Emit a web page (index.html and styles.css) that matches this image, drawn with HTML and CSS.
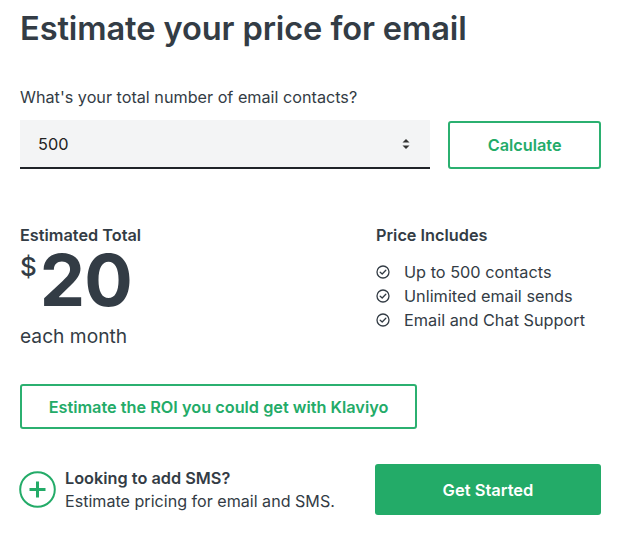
FILE: index.html
```html
<!DOCTYPE html>
<html>
<head>
<meta charset="utf-8">
<link rel="stylesheet" href="styles.css">
</head>
<body>
<main class="page">
  <h1 class="title">Estimate your price for email</h1>
  <label class="label">What's your total number of email contacts?</label>
  <div class="form-row">
    <div class="select">
      <span class="select-value">500</span>
      <svg class="spinner" width="8" height="12" viewBox="0 0 8 12"><path d="M4 1 L7.5 4.5 H0.5 Z" fill="#333"/><path d="M4 11 L7.5 7.5 H0.5 Z" fill="#333"/></svg>
    </div>
    <button class="btn-outline calc">Calculate</button>
  </div>
  <div class="results">
    <div class="total">
      <div class="sub-title">Estimated Total</div>
      <div class="price"><span class="dollar">$</span><span class="amount">20</span></div>
      <div class="period">each month</div>
    </div>
    <div class="includes">
      <div class="sub-title">Price Includes</div>
      <ul class="list">
        <li><svg class="check" width="14" height="14" viewBox="0 0 14 14"><circle cx="7" cy="7" r="6" fill="none" stroke="#333c45" stroke-width="1.3"/><path d="M4.2 7.2 L6.2 9 L9.8 5.2" fill="none" stroke="#333c45" stroke-width="1.3" stroke-linecap="round" stroke-linejoin="round"/></svg>Up to 500 contacts</li>
        <li><svg class="check" width="14" height="14" viewBox="0 0 14 14"><circle cx="7" cy="7" r="6" fill="none" stroke="#333c45" stroke-width="1.3"/><path d="M4.2 7.2 L6.2 9 L9.8 5.2" fill="none" stroke="#333c45" stroke-width="1.3" stroke-linecap="round" stroke-linejoin="round"/></svg>Unlimited email sends</li>
        <li><svg class="check" width="14" height="14" viewBox="0 0 14 14"><circle cx="7" cy="7" r="6" fill="none" stroke="#333c45" stroke-width="1.3"/><path d="M4.2 7.2 L6.2 9 L9.8 5.2" fill="none" stroke="#333c45" stroke-width="1.3" stroke-linecap="round" stroke-linejoin="round"/></svg>Email and Chat Support</li>
      </ul>
    </div>
  </div>
  <button class="btn-outline roi">Estimate the ROI you could get with Klaviyo</button>
  <div class="bottom">
    <div class="sms">
      <svg class="plus" width="37" height="37" viewBox="0 0 37 37"><circle cx="18.5" cy="18.5" r="17.3" fill="none" stroke="#23ab68" stroke-width="2"/><path d="M18.5 10.5 V26.5 M10.5 18.5 H26.5" stroke="#23ab68" stroke-width="3"/></svg>
      <div class="sms-text">
        <div class="sms-title">Looking to add SMS?</div>
        <div class="sms-desc">Estimate pricing for email and SMS.</div>
      </div>
    </div>
    <button class="btn-solid">Get Started</button>
  </div>
</main>
</body>
</html>
```
FILE: styles.css
```css
* { box-sizing: border-box; }
body {
  margin: 0;
  background: #fff;
  font-family: Inter, "Noto Sans", sans-serif;
  color: #333c45;
}
.page {
  padding: 8px 23px 0 20px;
  display: flex;
  flex-direction: column;
}
.title {
  margin: 0;
  font-size: 32.6px;
  font-weight: 600;
  line-height: 40px;
  letter-spacing: -0.1px;
}
.label {
  margin-top: 39px;
  font-size: 16.2px;
  line-height: 20px;
}
.form-row {
  margin-top: 13px;
  display: flex;
  gap: 18px;
  align-items: flex-start;
}
.select {
  width: 411px;
  height: 49px;
  background: #f3f4f5;
  border-bottom: 2px solid #1f2328;
  display: flex;
  align-items: center;
  justify-content: space-between;
  padding: 0 20px 0 18px;
}
.select-value { font-size: 16.3px; color: #222; }
.spinner { display: block; }
.btn-outline {
  font-family: inherit;
  background: #fff;
  border: 2px solid #2bb070;
  border-radius: 3px;
  color: #23ab68;
  font-size: 16.3px;
  font-weight: 600;
  cursor: pointer;
}
.calc {
  width: 153px;
  height: 48px;
  margin-top: 1px;
}
.results {
  margin-top: 56px;
  display: flex;
}
.total { width: 356px; }
.sub-title {
  font-size: 16.3px;
  font-weight: 600;
  line-height: 20px;
}
.price {
  display: flex;
  align-items: flex-start;
  margin-top: 0;
  height: 70px;
}
.dollar {
  font-size: 26px;
  font-weight: 500;
  line-height: 20px;
  margin-top: 12px;
  margin-right: 3px;
}
.amount {
  font-size: 72px;
  font-weight: 700;
  line-height: 70px;
  letter-spacing: -1px;
}
.period {
  margin-top: 9px;
  font-size: 19.2px;
  line-height: 24px;
}
.list {
  list-style: none;
  margin: 15px 0 0;
  padding: 0;
}
.list li {
  display: flex;
  align-items: center;
  font-size: 16.3px;
  line-height: 24px;
}
.check { margin-right: 14px; flex: none; }
.roi {
  margin-top: 36px;
  width: 397px;
  height: 45px;
}
.bottom {
  margin-top: 35px;
  display: flex;
  align-items: center;
  justify-content: space-between;
}
.sms {
  display: flex;
  align-items: center;
  gap: 9px;
}
.plus { display: block; margin-left: -1px; }
.sms-title {
  font-size: 16.3px;
  font-weight: 600;
  line-height: 23px;
}
.sms-desc {
  font-size: 16.1px;
  line-height: 23px;
}
.btn-solid {
  font-family: inherit;
  width: 226px;
  height: 51px;
  background: #23ab68;
  border: none;
  border-radius: 3px;
  color: #fff;
  font-size: 16.5px;
  font-weight: 600;
}
```
